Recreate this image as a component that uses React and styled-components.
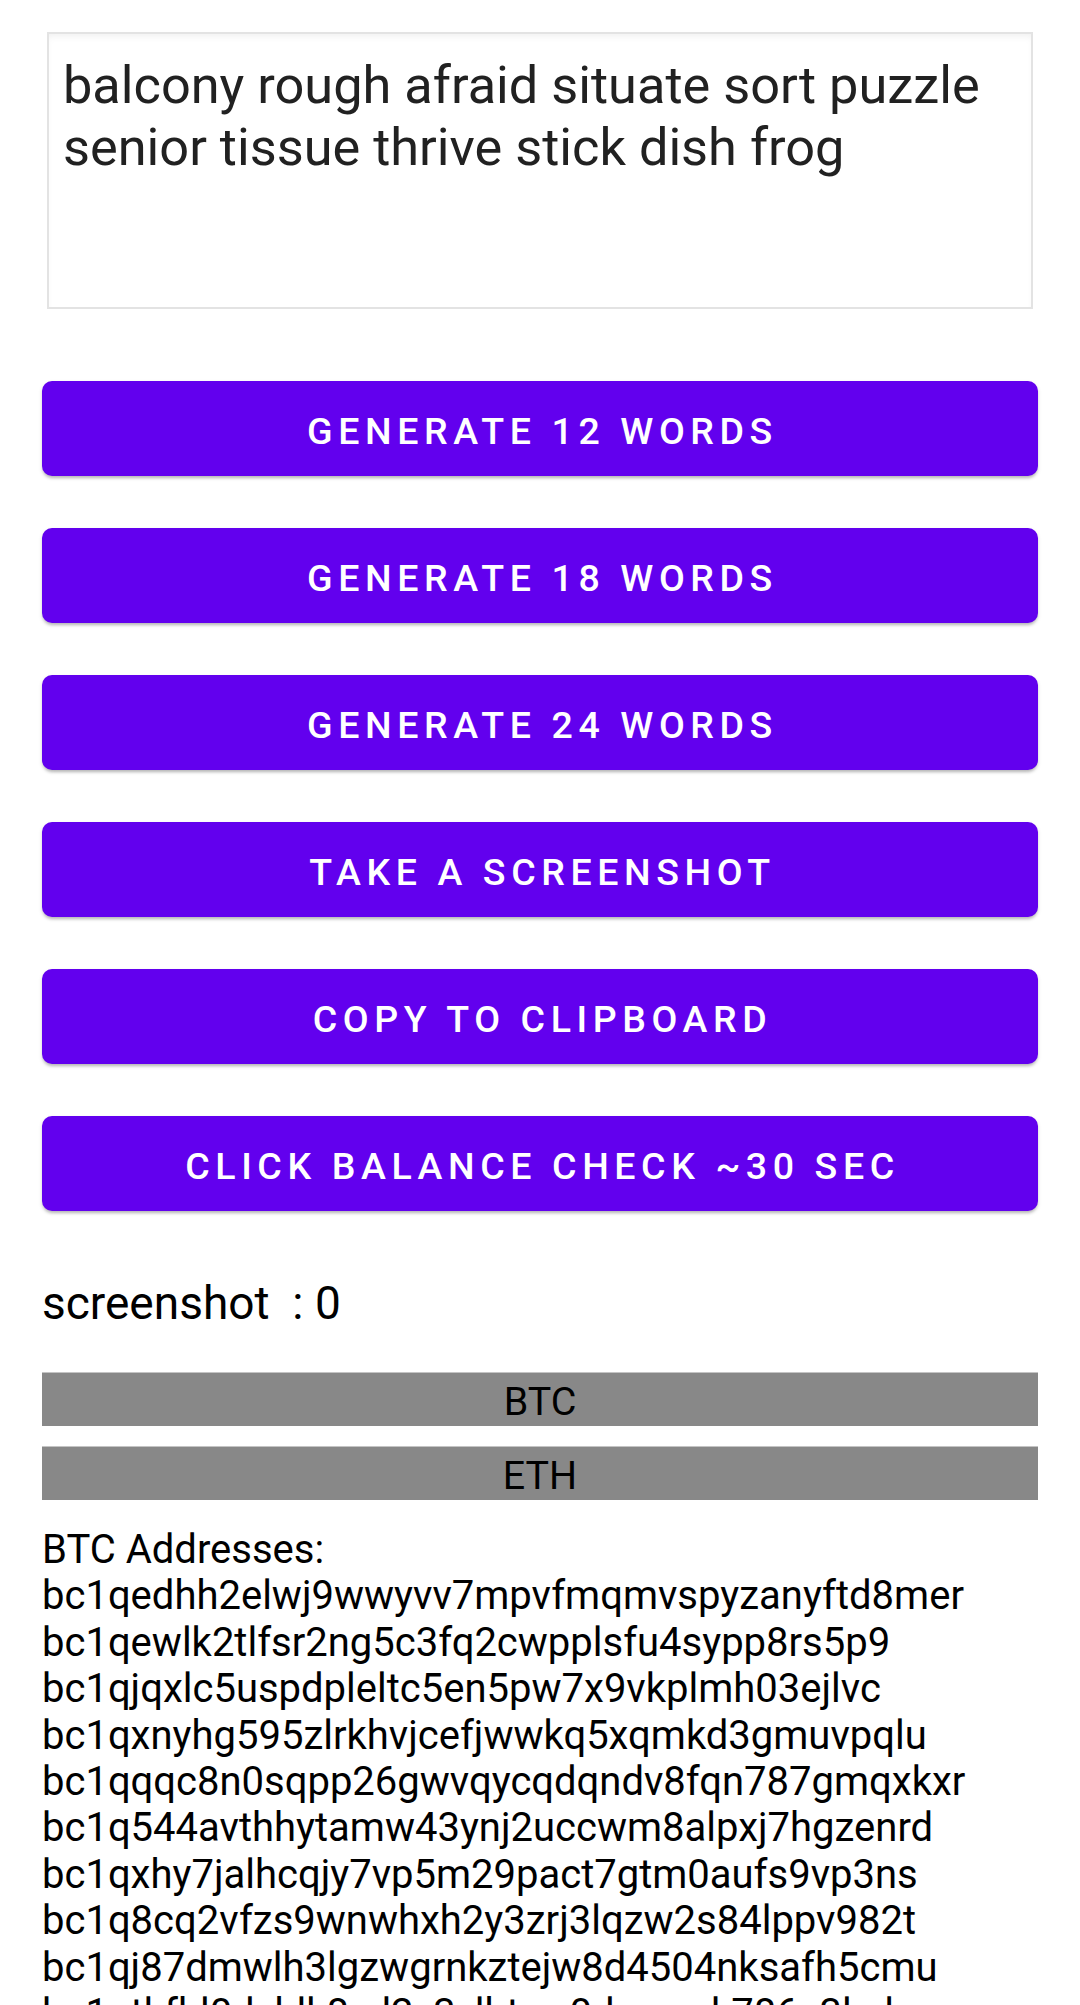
import React from "react";

// style
import styled, { createGlobalStyle } from "styled-components";

const GlobalStyle = createGlobalStyle`
  html, body {
    margin: 0;
    padding: 0;
    background: #fff;
  }
  body {
    font-family: Roboto, "Noto Sans", sans-serif;
    color: #000;
  }
`;

const mnemonic =
  "balcony rough afraid situate sort puzzle senior tissue thrive stick dish frog";

const buttons = [
  "Generate 12 words",
  "Generate 18 words",
  "Generate 24 words",
  "Take a screenshot",
  "Copy to clipboard",
  "Click balance check ~30 sec",
];

const addresses = [
  "bc1qedhh2elwj9wwyvv7mpvfmqmvspyzanyftd8mer",
  "bc1qewlk2tlfsr2ng5c3fq2cwpplsfu4sypp8rs5p9",
  "bc1qjqxlc5uspdpleltc5en5pw7x9vkplmh03ejlvc",
  "bc1qxnyhg595zlrkhvjcefjwwkq5xqmkd3gmuvpqlu",
  "bc1qqqc8n0sqpp26gwvqycqdqndv8fqn787gmqxkxr",
  "bc1q544avthhytamw43ynj2uccwm8alpxj7hgzenrd",
  "bc1qxhy7jalhcqjy7vp5m29pact7gtm0aufs9vp3ns",
  "bc1q8cq2vfzs9wnwhxh2y3zrj3lqzw2s84lppv982t",
  "bc1qj87dmwlh3lgzwgrnkztejw8d4504nksafh5cmu",
  "bc1qtkfhl0dzhlk8xd2z3ylhtwz0dvzmnk786c3lxd",
];

const App = () => {
  return (
    <>
      <GlobalStyle />
      <Screen>
        <SeedBox>{mnemonic}</SeedBox>

        <ButtonList>
          {buttons.map((label) => (
            <ActionButton key={label}>{label}</ActionButton>
          ))}
        </ButtonList>

        <Counter>{"screenshot  : 0"}</Counter>

        <CoinTabs>
          <CoinTab>BTC</CoinTab>
          <CoinTab>ETH</CoinTab>
        </CoinTabs>

        <AddressList>
          <span>BTC Addresses:</span>
          {addresses.map((addr) => (
            <span key={addr}>{addr}</span>
          ))}
        </AddressList>
      </Screen>
    </>
  );
};

export default App;

const Screen = styled.div`
  width: 1080px;
  box-sizing: border-box;
  padding: 32px 42px 0;
  display: flex;
  flex-direction: column;
`;

const SeedBox = styled.div`
  margin: 0 5px;
  height: 277px;
  box-sizing: border-box;
  border: 2px solid #e3e3e3;
  box-shadow: inset 0 5px 8px -4px rgba(0, 0, 0, 0.08);
  padding: 21px 16px 0 14px;
  font-size: 52.3px;
  line-height: 61.5px;
  color: #212121;
`;

const ButtonList = styled.div`
  margin-top: 72px;
  display: flex;
  flex-direction: column;
  gap: 52px;
`;

const ActionButton = styled.button`
  height: 95px;
  width: 100%;
  border: none;
  border-radius: 10px;
  background: #6200ee;
  color: #fff;
  font-family: Roboto, sans-serif;
  font-weight: 500;
  font-size: 37.5px;
  letter-spacing: 5.6px;
  text-transform: uppercase;
  box-shadow: 0 3px 3px -1px rgba(0, 0, 0, 0.2), 0 2px 4px 0 rgba(0, 0, 0, 0.12);
  padding: 4px 0 0 5px;
`;

const Counter = styled.div`
  margin-top: 65px;
  font-size: 46px;
  line-height: 54px;
  white-space: pre;
`;

const CoinTabs = styled.div`
  margin-top: 42px;
  display: flex;
  flex-direction: column;
  gap: 20px;
`;

const CoinTab = styled.div`
  height: 54px;
  background: #888888;
  border-top: 1px solid #c4c4c4;
  box-sizing: border-box;
  display: flex;
  align-items: center;
  justify-content: center;
  padding-top: 4px;
  font-size: 39.4px;
  color: #000;
`;

const AddressList = styled.div`
  margin-top: 27px;
  display: flex;
  flex-direction: column;
  font-size: 40px;
  line-height: 46.4px;
  color: #000;
`;
